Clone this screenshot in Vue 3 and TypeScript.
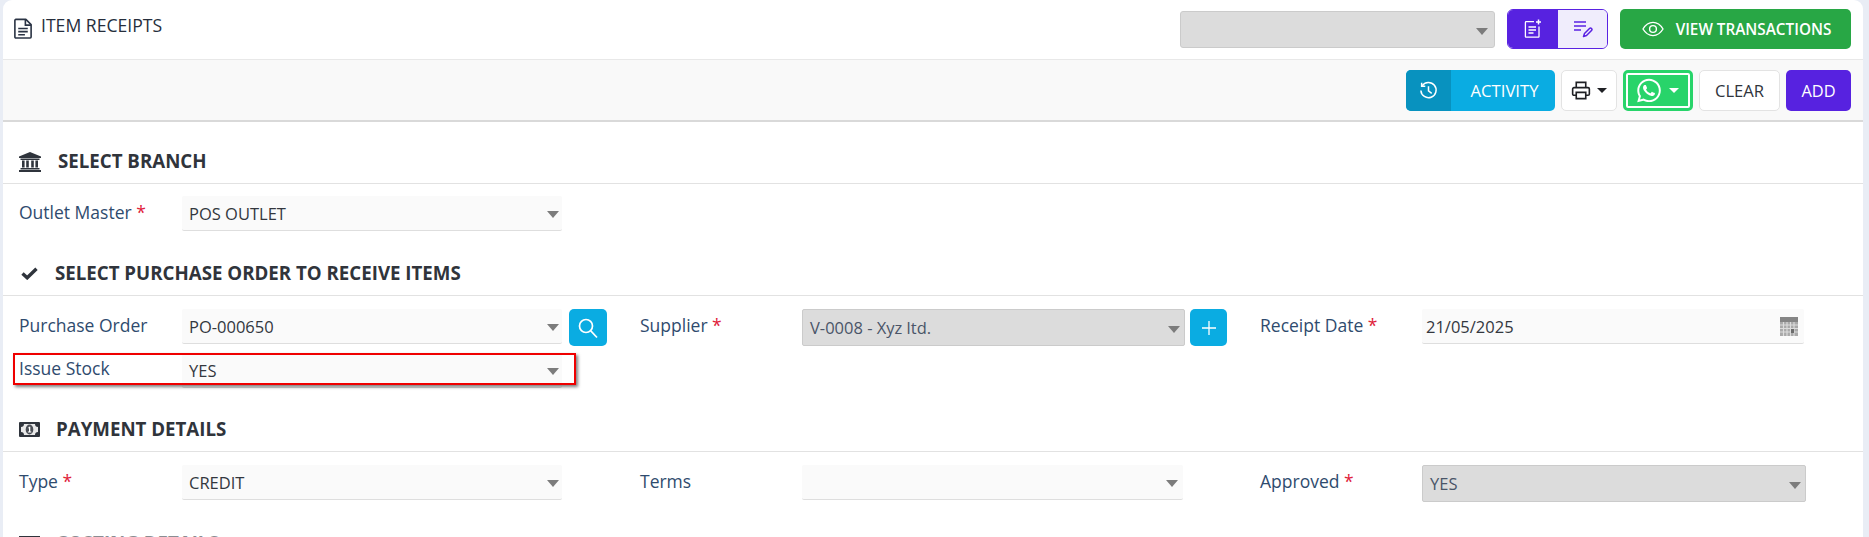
<script setup lang="ts">
interface Field {
  label: string;
  required?: boolean;
  value: string;
  disabled?: boolean;
  action?: 'search' | 'add';
  date?: boolean;
  wide?: boolean;
}

const orderFields: Field[] = [
  { label: 'Purchase Order', value: 'PO-000650', action: 'search' },
  { label: 'Supplier', required: true, value: 'V-0008 - Xyz ltd.', disabled: true, action: 'add' },
  { label: 'Receipt Date', required: true, value: '21/05/2025', date: true },
];

const paymentFields: Field[] = [
  { label: 'Type', required: true, value: 'CREDIT' },
  { label: 'Terms', value: '', wide: true },
  { label: 'Approved', required: true, value: 'YES', disabled: true },
];

const whatsappPath =
  'M380.9 97.1C339 55.1 283.2 32 223.9 32c-122.4 0-222 99.6-222 222 0 39.1 10.2 77.3 29.6 111L0 480l117.7-30.9c32.4 17.7 68.9 27 106.1 27h.1c122.3 0 224.1-99.6 224.1-222 0-59.3-25.2-115-67.1-157zm-157 341.6c-33.2 0-65.7-8.9-94-25.7l-6.7-4-69.8 18.3L72 359.2l-4.4-7c-18.5-29.4-28.2-63.3-28.2-98.2 0-101.7 82.8-184.5 184.6-184.5 49.3 0 95.6 19.2 130.4 54.1 34.8 34.9 56.2 81.2 56.1 130.5 0 101.8-84.9 184.6-186.6 184.6zm101.2-138.2c-5.5-2.8-32.8-16.2-37.9-18-5.1-1.9-8.8-2.8-12.5 2.8-3.7 5.6-14.3 18-17.6 21.8-3.2 3.7-6.5 4.2-12 1.4-32.6-16.3-54-29.1-75.5-66-5.7-9.8 5.7-9.1 16.3-30.3 1.8-3.7.9-6.9-.5-9.7-1.4-2.8-12.5-30.1-17.1-41.2-4.5-10.8-9.1-9.3-12.5-9.5-3.2-.2-6.9-.2-10.6-.2-3.7 0-9.7 1.4-14.8 6.9-5.1 5.6-19.4 19-19.4 46.3 0 27.3 19.9 53.7 22.6 57.4 2.8 3.7 39.1 59.7 94.8 83.8 35.2 15.2 49 16.5 66.6 13.9 10.7-1.6 32.8-13.4 37.4-26.4 4.6-13 4.6-24.1 3.2-26.4-1.3-2.5-5-3.9-10.5-6.6z';
</script>

<template>
  <div class="page">
    <div class="sheet">
      <header class="topbar">
        <div class="title">
          <svg class="title-icon" viewBox="0 0 20 22" fill="none" stroke="#2b3445" stroke-width="1.7">
            <path d="M1.5 2.5a1 1 0 0 1 1-1h10.5l5.5 5.5v13a1 1 0 0 1-1 1h-15a1 1 0 0 1-1-1z" stroke-linejoin="round" />
            <path d="M12.5 1.5v6h6" />
            <path d="M5 11h10M5 14.3h10M5 17.6h7" />
          </svg>
          <span class="title-text">ITEM RECEIPTS</span>
        </div>
        <div class="top-actions">
          <div class="top-select"><span class="caret"></span></div>
          <div class="toggle">
            <span class="toggle-on">
              <svg width="20" height="20" viewBox="0 0 20 20" fill="none" stroke="#fff" stroke-width="1.3">
                <path d="M11 2.6H3.2a.8.8 0 0 0-.8.8v14a.8.8 0 0 0 .8.8h12a.8.8 0 0 0 .8-.8V7.5" />
                <path d="M5.5 8h7.5M5.5 11h7.5M5.5 14h5" stroke-width="1.5" />
                <path d="M15.5 .6v5M13 3.1h5" stroke-width="1.5" />
              </svg>
            </span>
            <span class="toggle-off">
              <svg width="20" height="20" viewBox="0 0 20 20" fill="none" stroke="#5a22e2" stroke-width="1.5">
                <path d="M1 3h12M1 7h12M1 11h7" />
                <path d="M10.5 17.5l1-3 5-5a1.3 1.3 0 0 1 2 2l-5 5z" stroke-linejoin="round" />
              </svg>
            </span>
          </div>
          <button class="btn-view">
            <svg width="22" height="16" viewBox="0 0 22 16" fill="none" stroke="#fff" stroke-width="1.4">
              <path d="M1 8c2.6-4.4 6-6.6 10-6.6S18.400 3.600 21 8c-2.600 4.400-6 6.600-10 6.600S3.600 12.400 1 8z" />
              <circle cx="11" cy="8" r="3.400" />
            </svg>
            <span>VIEW TRANSACTIONS</span>
          </button>
        </div>
      </header>

      <div class="toolbar">
        <button class="btn-activity">
          <span class="activity-icon">
            <svg width="19" height="19" viewBox="0 0 20 20" fill="none" stroke="#fff" stroke-width="1.6">
              <path d="M3.300 5.200A8 8 0 1 1 2 10" />
              <path d="M2.800 1.800v3.800h3.800" />
              <path d="M10 5.500v5l3.400 2.400" />
            </svg>
          </span>
          <span class="activity-text">ACTIVITY</span>
        </button>
        <button class="btn-light btn-print">
          <svg width="20" height="19" viewBox="0 0 20 20" fill="none" stroke="#1f2024" stroke-width="1.700">
            <path d="M5 7V1.500h10V7" />
            <path d="M5 15H2.600a1.400 1.400 0 0 1-1.400-1.400V8.400A1.400 1.400 0 0 1 2.600 7h14.800a1.400 1.400 0 0 1 1.400 1.400v5.200a1.400 1.400 0 0 1-1.400 1.400H15" />
            <path d="M5 12h10v6.500H5z" />
          </svg>
          <span class="mini-caret dark"></span>
        </button>
        <button class="btn-whatsapp">
          <svg width="24" height="27" viewBox="0 0 448 512" fill="#fff"><path :d="whatsappPath" /></svg>
          <span class="mini-caret"></span>
        </button>
        <button class="btn-light btn-clear">CLEAR</button>
        <button class="btn-add">ADD</button>
      </div>

      <section class="section first">
        <h2 class="heading">
          <svg class="bank-icon" viewBox="0 0 22 20" fill="#2f343c">
            <path d="M11 0l11 4.600V6H0V4.600z" />
            <path d="M1.500 6.500h19V8h-19z" />
            <path d="M3 8.500h2.600v7H3zM7.200 8.500h2.600v7H7.200zM12.200 8.500h2.600v7h-2.600zM16.400 8.500H19v7h-2.600z" />
            <path d="M1.500 16h19v1.400h-19zM0 18h22v2H0z" />
          </svg>
          <span>SELECT BRANCH</span>
        </h2>
        <div class="fields">
          <div class="field">
            <label class="label">Outlet Master <em>*</em></label>
            <div class="control"><div class="select"><span>POS OUTLET</span><span class="caret"></span></div></div>
          </div>
        </div>
      </section>

      <section class="section order">
        <h2 class="heading">
          <svg class="check-icon" viewBox="0 0 17 13" fill="none" stroke="#2f343c" stroke-width="3.400">
            <path d="M1.500 6.500l4.700 4.300 9.300-9" />
          </svg>
          <span>SELECT PURCHASE ORDER TO RECEIVE ITEMS</span>
        </h2>
        <div class="fields">
          <div v-for="f in orderFields" :key="f.label" class="field">
            <label class="label">{{ f.label }} <em v-if="f.required">*</em></label>
            <div class="control" :class="{ tight: f.action === 'add' }">
              <div v-if="f.date" class="select date">
                <span>{{ f.value }}</span>
                <svg class="calendar" viewBox="0 0 18 19">
                  <rect width="18" height="19" fill="#858585" />
                  <rect y="5" width="18" height="14" fill="#a9a9a9" />
                  <path d="M0 8h18M0 11.500h18M0 15h18M3.500 5v14M7 5v14M10.500 5v14M14 5v14" stroke="#dcdcdc" stroke-width="1.100" />
                  <rect x="11" y="12" width="3" height="4" fill="#6c6c6c" />
                </svg>
              </div>
              <div v-else class="select" :class="{ disabled: f.disabled }">
                <span>{{ f.value }}</span><span class="caret"></span>
              </div>
              <button v-if="f.action === 'search'" class="icon-btn search-btn">
                <svg width="22" height="22" viewBox="0 0 22 22" fill="none" stroke="#fff" stroke-width="1.700">
                  <circle cx="9" cy="9" r="6.500" />
                  <path d="M13.800 13.800l6.200 6.700" />
                </svg>
              </button>
              <button v-else-if="f.action === 'add'" class="icon-btn">
                <svg width="14" height="14" viewBox="0 0 14 14" stroke="#fff" stroke-width="1.300"><path d="M7 0v14M0 7h14" /></svg>
              </button>
            </div>
          </div>
        </div>
        <div class="fields issue-row">
          <div class="field">
            <label class="label issue-label">Issue Stock</label>
            <div class="control"><div class="select"><span>YES</span><span class="caret"></span></div></div>
          </div>
          <div class="red-box"></div>
        </div>
      </section>

      <section class="section payment">
        <h2 class="heading">
          <svg class="money-icon" viewBox="0 0 21 15">
            <rect width="21" height="15" rx="1" fill="#2f343c" />
            <rect x="2" y="2" width="17" height="11" fill="#e9e9e9" />
            <path d="M2 2h3a3 3 0 0 1-3 3zM19 2h-3a3 3 0 0 0 3 3zM2 13h3a3 3 0 0 0-3-3zM19 13h-3a3 3 0 0 1 3-3z" fill="#2f343c" />
            <ellipse cx="10.500" cy="7.500" rx="3.800" ry="5" fill="#4a4e55" />
            <path d="M10 4.800h1.300v4.800h1v1H8.900v-1h1.100V6.200H9z" fill="#fff" />
          </svg>
          <span>PAYMENT DETAILS</span>
        </h2>
        <div class="fields">
          <div v-for="f in paymentFields" :key="f.label" class="field">
            <label class="label">{{ f.label }} <em v-if="f.required">*</em></label>
            <div class="control">
              <div class="select" :class="{ disabled: f.disabled, approved: f.disabled, wide: f.wide }">
                <span>{{ f.value }}</span><span class="caret"></span>
              </div>
            </div>
          </div>
        </div>
      </section>

      <section class="section costing">
        <h2 class="heading">
          <svg class="table-icon" viewBox="0 0 21 15"><rect width="21" height="15" fill="#2f343c" /></svg>
          <span class="costing-text">COSTING DETAILS</span>
        </h2>
      </section>
    </div>
  </div>
</template>

<style>
html,
body {
  margin: 0;
  overflow: hidden;
  background: #e9edf5;
}
</style>

<style scoped>
.page {
  width: 1869px;
  height: 537px;
  overflow: hidden;
  padding: 0 6px 0 3px;
  box-sizing: border-box;
  background: #e9edf5;
  font-family: "Open Sans", "Liberation Sans", sans-serif;
}

.sheet {
  background: #fff;
  height: 100%;
  border-radius: 9px 9px 0 0;
  overflow: hidden;
  color: #30343b;
}

button {
  font-family: inherit;
  border: 0;
  padding: 0;
}

.topbar {
  height: 60px;
  box-sizing: border-box;
  border-bottom: 1px solid #e8e8e8;
  display: flex;
  justify-content: space-between;
  padding: 9px 12px 0 10px;
}

.title {
  display: flex;
  align-items: flex-start;
  gap: 8px;
  font-size: 17.6px;
  font-weight: 500;
  line-height: 22px;
  color: #262e3c;
  padding-top: 9px;
}

.title-text {
  margin-top: -4px;
}

.title-icon {
  width: 20px;
  height: 21px;
}

.top-actions {
  display: flex;
  align-items: flex-start;
}

.top-select {
  width: 315px;
  height: 37px;
  margin-top: 2px;
  box-sizing: border-box;
  background: #dcdcdc;
  border: 1px solid #cbcbcb;
  border-radius: 3px;
  position: relative;
  margin-right: 12px;
}

.top-select .caret {
  right: 6px;
}

.toggle {
  width: 101px;
  height: 40px;
  box-sizing: border-box;
  border: 1px solid #5a22e2;
  border-radius: 6px;
  display: flex;
  overflow: hidden;
  margin-right: 12px;
}

.toggle span {
  display: flex;
  align-items: center;
  justify-content: center;
}

.toggle-on {
  width: 50px;
  background: #5722e0;
}

.toggle-off {
  flex: 1;
  background: #f0edfc;
}

.btn-view {
  width: 231px;
  height: 40px;
  background: #28a745;
  color: #fff;
  border-radius: 5px;
  font-size: 15.3px;
  font-weight: 600;
  display: flex;
  align-items: center;
  justify-content: center;
  gap: 12px;
  padding-left: 2px;
}

.toolbar {
  height: 62px;
  box-sizing: border-box;
  background: #f9f9f9;
  border-bottom: 2px solid #d9d9d9;
  display: flex;
  justify-content: flex-end;
  gap: 6px;
  padding: 10px 12px 0 0;
}

.toolbar button {
  height: 41px;
  border-radius: 5px;
  display: flex;
  align-items: center;
  justify-content: center;
}

.btn-activity {
  width: 149px;
  background: #0aace2;
  color: #fff;
  overflow: hidden;
}

.activity-icon {
  width: 45px;
  height: 100%;
  background: #0892bf;
  display: flex;
  align-items: center;
  justify-content: center;
}

.activity-text {
  flex: 1;
  font-size: 16.7px;
  padding-left: 3px;
}

.btn-light {
  background: #fff;
  box-sizing: border-box;
  border: 1px solid #e3e3e3;
  color: #30343b;
}

.btn-print {
  width: 56px;
  gap: 6px;
}

.btn-whatsapp {
  width: 70px;
  box-sizing: border-box;
  background: #28d46a;
  border: 3px solid #28d46a;
  outline: 2px solid #fff;
  outline-offset: -5px;
  gap: 8px;
}

.btn-clear {
  width: 81px;
  font-size: 16.6px;
}

.btn-add {
  width: 65px;
  background: #5722e0;
  color: #fff;
  font-size: 16.4px;
}

.mini-caret {
  width: 0;
  height: 0;
  border-left: 5px solid transparent;
  border-right: 5px solid transparent;
  border-top: 5px solid #fff;
}

.mini-caret.dark {
  border-top-color: #1f2024;
}

.heading {
  margin: 0;
  height: 40px;
  box-sizing: border-box;
  border-bottom: 1px solid #e2e2e2;
  display: flex;
  align-items: flex-start;
  font-size: 18.7px;
  font-weight: 700;
  line-height: 22px;
  color: #30343b;
  padding: 6px 0 0 16px;
  white-space: nowrap;
}

.first {
  padding-top: 22px;
}

.order {
  padding-top: 25px;
}

.payment {
  padding-top: 24px;
}

.costing {
  padding-top: 34px;
  overflow: hidden;
}

.bank-icon {
  width: 22px;
  height: 20px;
  margin: 2px 17px 0 0;
}

.check-icon {
  width: 17px;
  height: 13px;
  margin: 5px 17px 0 2px;
}

.money-icon {
  width: 21px;
  height: 15px;
  margin: 4px 16px 0 0;
}

.table-icon {
  width: 21px;
  height: 15px;
  margin: 0 16px 0 0;
}

.costing .heading {
  padding-top: 0;
}

.costing-text {
  color: #8a8d92;
  margin-top: -4px;
}

.fields {
  display: grid;
  grid-template-columns: repeat(3, 620px);
  padding: 13px 0 0 17px;
}

.first .fields {
  padding-top: 12px;
}

.field {
  display: flex;
}

.label {
  width: 162px;
  flex: none;
  font-size: 17.5px;
  line-height: 20px;
  padding-top: 6px;
  color: #2f4b6e;
}

.field:first-child .label {
  width: 163px;
  margin-left: -1px;
}

.issue-label {
  padding-top: 5px;
}

.label em {
  color: #e0213a;
  font-style: normal;
}

.control {
  display: flex;
  gap: 7px;
}

.control.tight {
  gap: 5px;
}

.select {
  width: 380px;
  height: 35px;
  box-sizing: border-box;
  background: #fafafa;
  border-bottom: 1px solid #dedede;
  border-radius: 2px;
  position: relative;
  display: flex;
  align-items: center;
  padding-left: 7px;
  font-size: 16.5px;
  color: #33373e;
}

.select.wide {
  width: 381px;
}

.select.wide .caret {
  right: 5px;
}

.select.disabled {
  height: 37px;
  width: 383px;
  background: #dcdcdc;
  border: 1px solid #cbcbcb;
  color: #4a5568;
  padding-left: 7px;
}

.select.disabled .caret {
  right: 4px;
}

.select.approved {
  width: 384px;
}

.select.date {
  width: 382px;
  padding-left: 4px;
}

.caret {
  position: absolute;
  right: 3px;
  top: 50%;
  margin-top: -2px;
  width: 0;
  height: 0;
  border-left: 6px solid transparent;
  border-right: 6px solid transparent;
  border-top: 7px solid #7c7c7c;
}

.calendar {
  position: absolute;
  right: 6px;
  top: 8px;
  width: 18px;
  height: 19px;
}

.icon-btn {
  width: 37px;
  height: 37px;
  background: #0aace2;
  border-radius: 5px;
  display: flex;
  align-items: center;
  justify-content: center;
}

.search-btn {
  width: 38px;
}

.issue-row {
  padding-top: 7px;
  position: relative;
}

.red-box {
  position: absolute;
  left: 10px;
  top: 7px;
  width: 563px;
  height: 32px;
  box-sizing: border-box;
  border: 2px solid #ef0000;
  box-shadow: 2px 2px 3px rgba(0, 0, 0, 0.5);
  pointer-events: none;
}
</style>
